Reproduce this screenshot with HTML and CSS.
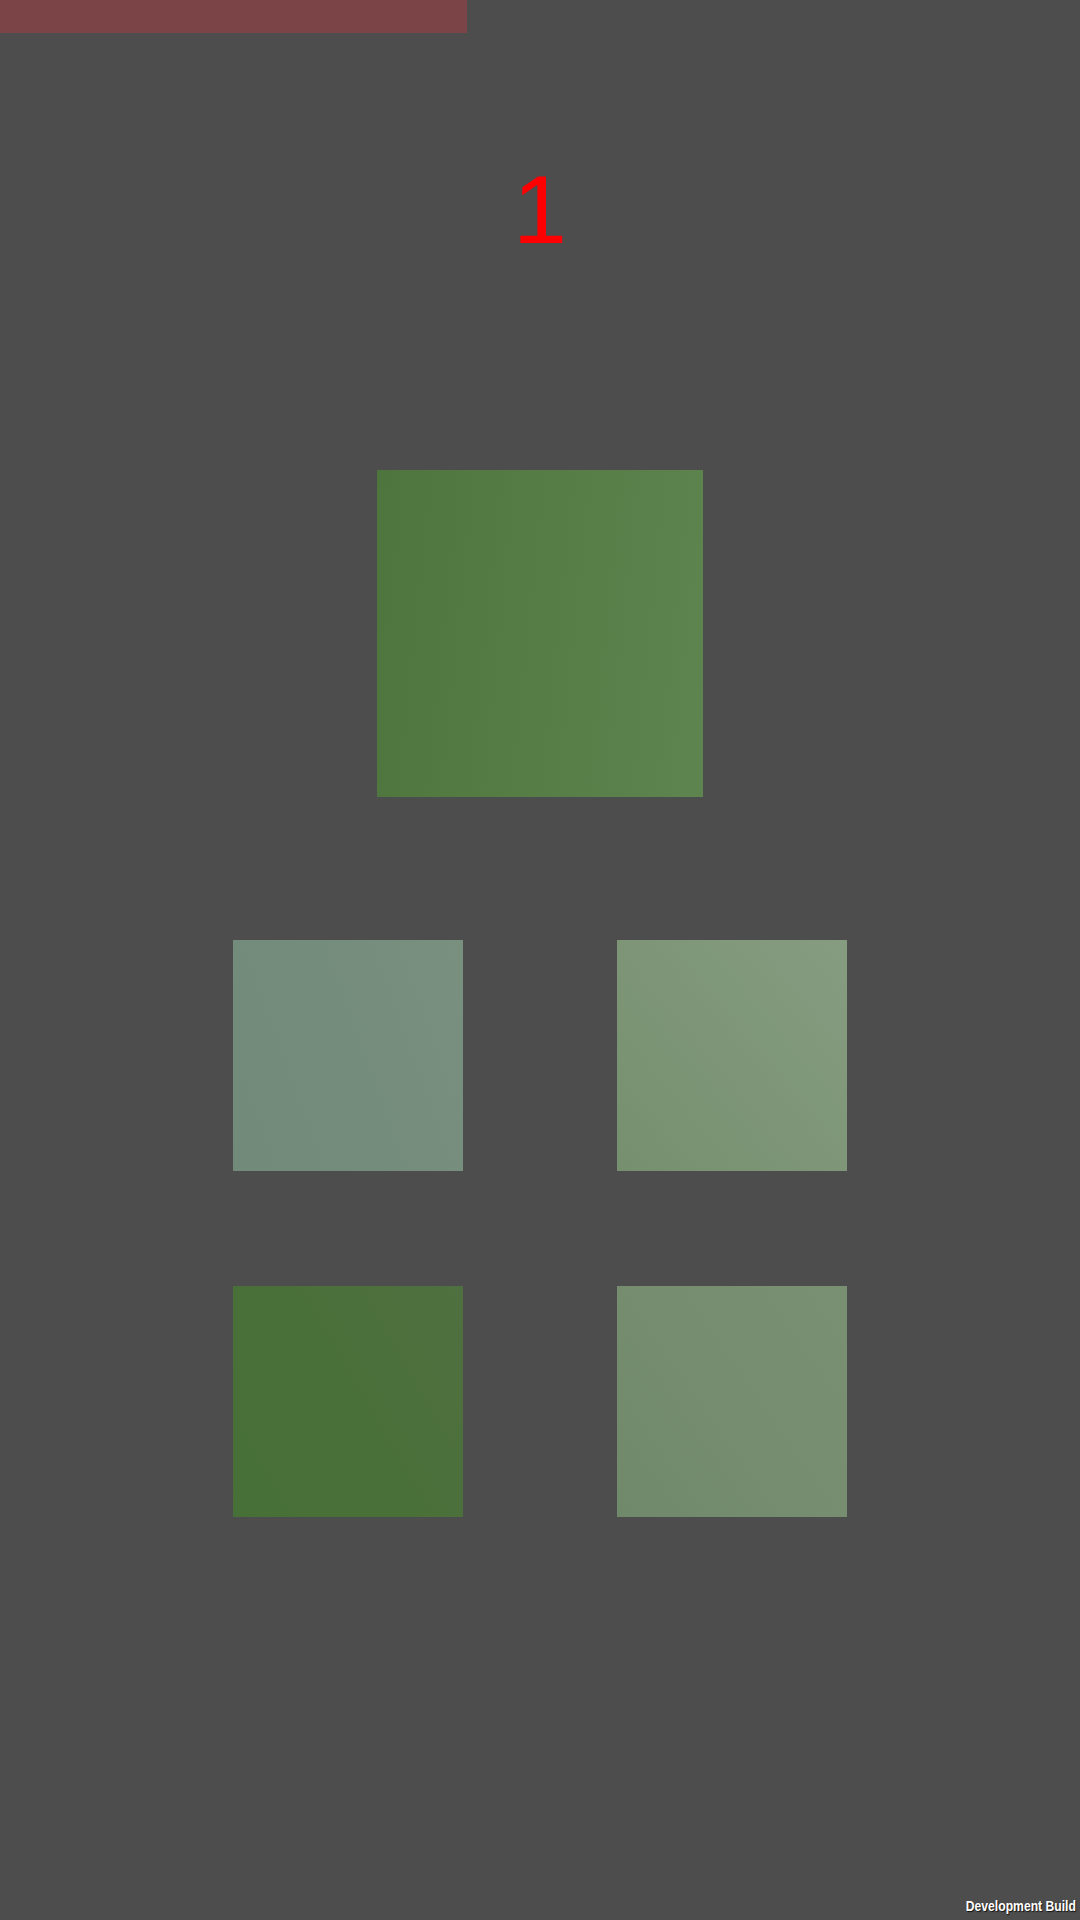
FILE: index.html
```html
<!DOCTYPE html>
<html lang="en">
<head>
<meta charset="utf-8">
<title>Scene</title>
<link rel="stylesheet" href="styles.css">
</head>
<body>
<div class="screen">
  <div class="top-bar"></div>
  <div class="counter">1</div>
  <div class="hero-tile"></div>
  <div class="tile-grid">
    <div class="tile tile-a"></div>
    <div class="tile tile-b"></div>
    <div class="tile tile-c"></div>
    <div class="tile tile-d"></div>
  </div>
  <div class="dev-build">Development Build</div>
</div>
</body>
</html>
```
FILE: styles.css
```css
html, body {
  margin: 0;
  padding: 0;
  background: #4d4d4d;
}

.screen {
  position: relative;
  width: 1080px;
  height: 1920px;
  overflow: hidden;
  display: flex;
  flex-direction: column;
  align-items: center;
  background: #4d4d4d;
}

.top-bar {
  align-self: flex-start;
  width: 467px;
  height: 33px;
  background: #7b4548;
}

.counter {
  margin-top: 127px;
  height: 100px;
  font-family: "Liberation Sans", Arial, sans-serif;
  font-size: 97px;
  line-height: 100px;
  color: #ff0000;
  text-align: center;
}

.hero-tile {
  margin-top: 210px;
  width: 326px;
  height: 327px;
  background: linear-gradient(96deg, #4e753e 0%, #567d46 50%, #5e844f 100%);
}

.tile-grid {
  margin-top: 143px;
  display: grid;
  grid-template-columns: 230px 230px;
  grid-auto-rows: 231px;
  column-gap: 154px;
  row-gap: 115px;
}

.tile-a {
  background: linear-gradient(70deg, #718a79 0%, #748c7c 50%, #79907f 100%);
}

.tile-b {
  background: linear-gradient(50deg, #76906f 0%, #7e9677 50%, #869c81 100%);
}

.tile-c {
  background: linear-gradient(60deg, #476f38 0%, #4a7039 50%, #4f7040 100%);
}

.tile-d {
  background: linear-gradient(55deg, #71896b 0%, #768d6f 50%, #7a9073 100%);
}

.dev-build {
  position: absolute;
  right: 4px;
  bottom: 6px;
  font-family: "Liberation Sans", Arial, sans-serif;
  font-weight: bold;
  font-size: 15px;
  line-height: 17px;
  color: #ffffff;
  text-shadow: 1px 1px 1px rgba(0, 0, 0, 0.8);
  transform: scaleX(0.81);
  transform-origin: right center;
  white-space: nowrap;
}
```
